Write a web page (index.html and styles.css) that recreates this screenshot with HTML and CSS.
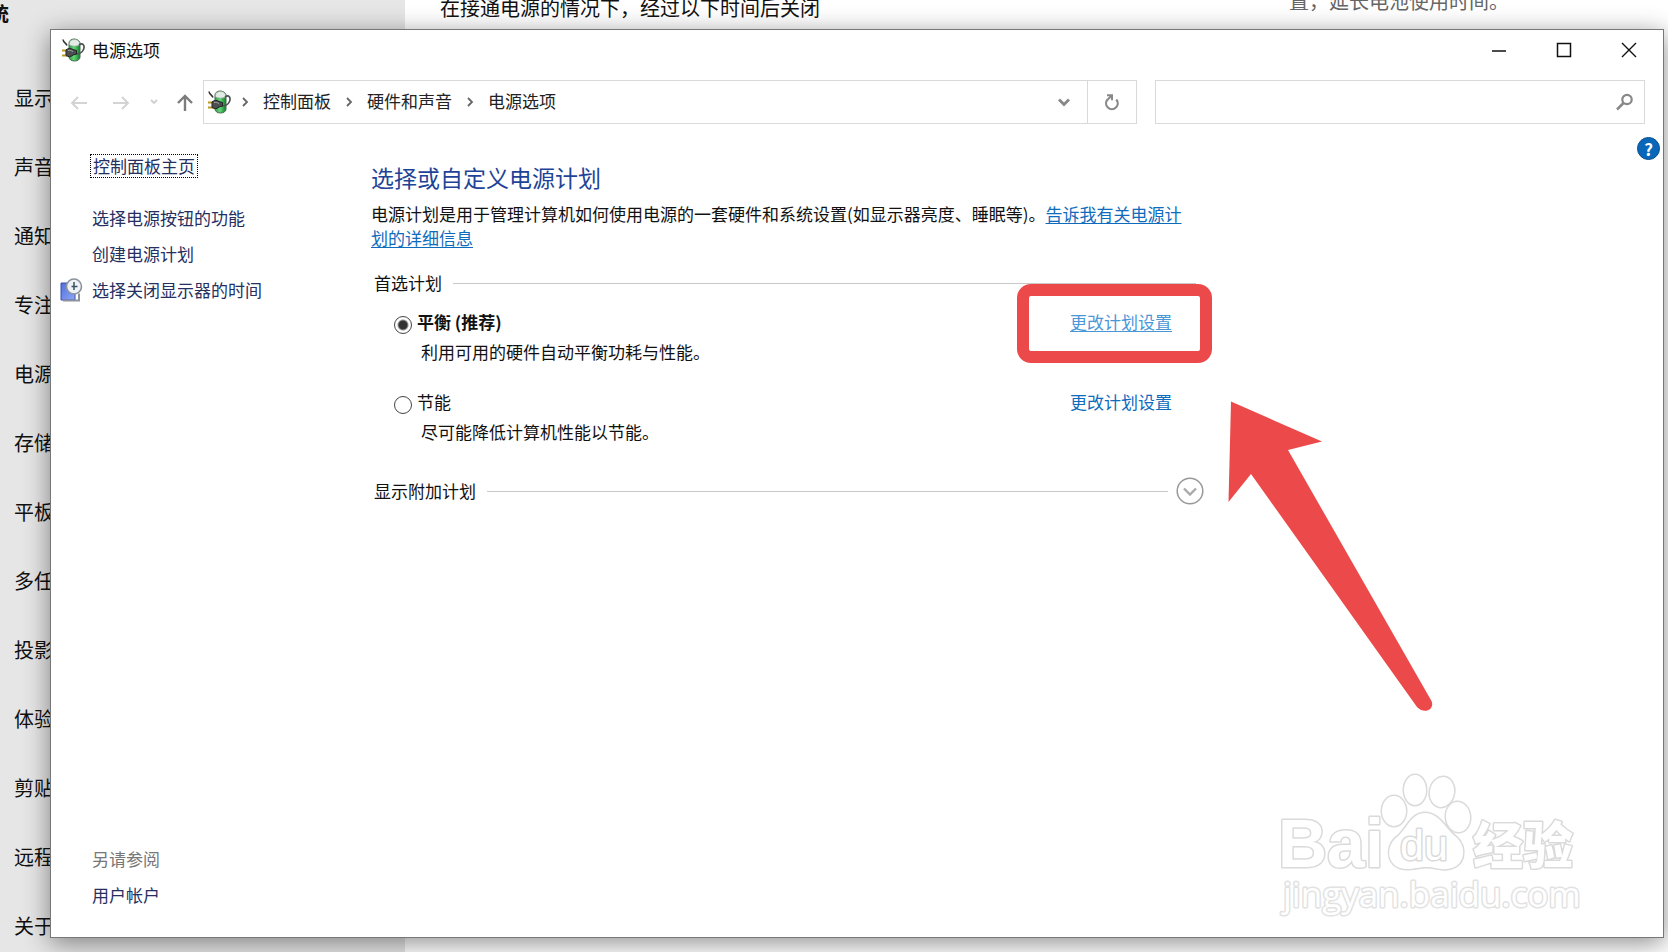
FILE: index.html
```html
<!DOCTYPE html>
<html lang="zh-CN">
<head>
    <meta charset="UTF-8">
    <meta name="viewport" content="width=device-width, initial-scale=1.0">
    <title>电源选项</title>
    <link rel="stylesheet" href="styles.css">
</head>
<body>
    <!-- settings page behind the window -->
    <div class="settings">
        <nav class="settings-nav">
            <h2>统</h2>
            <ul>
                <li>显示</li>
                <li>声音</li>
                <li>通知</li>
                <li>专注</li>
                <li>电源</li>
                <li>存储</li>
                <li>平板</li>
                <li>多任</li>
                <li>投影</li>
                <li>体验</li>
                <li>剪贴</li>
                <li>远程</li>
                <li>关于</li>
            </ul>
        </nav>
        <div class="settings-body">
            <p>在接通电源的情况下，经过以下时间后关闭</p>
            <p class="tip">置，延长电池使用时间。</p>
        </div>
    </div>

    <svg class="defs" width="0" height="0" aria-hidden="true">
        <defs>
            <linearGradient id="cell" x1="0" x2="1">
                <stop offset="0" stop-color="#2f9a45"/>
                <stop offset="0.45" stop-color="#62d777"/>
                <stop offset="1" stop-color="#157a2c"/>
            </linearGradient>
            <linearGradient id="screen" x1="0" x2="1" y2="1">
                <stop offset="0" stop-color="#4f6fe0"/>
                <stop offset="1" stop-color="#8fa8f4"/>
            </linearGradient>
            <symbol id="battery" viewBox="0 0 24 24">
                <path d="M8 5c0-2 2-4 5-4s6 2 6 4v14c0 2.500-2.500 4-5.500 4S8 21.500 8 19z" fill="url(#cell)" stroke="#49684d"/>
                <path d="M8.500 5c0-2 2-3.500 4.800-3.500S18.500 3 18.500 5v2c-3 1.500-7 1.500-10 0z" fill="#e3ebe6" stroke="#98a59b" stroke-width=".6"/>
                <path d="M2 1.500c.5 3.500 3 3 4 6" fill="none" stroke="#333" stroke-width="1.600"/>
                <path d="M18 7c4-3 6 1 4.500 4.500C21 15 19 16 14 16" fill="none" stroke="#4c5351" stroke-width="1.700"/>
                <path d="M1 12.500h5M1 17.500h5" stroke="#b79a22" stroke-width="2"/>
                <path d="M5 12c2-2 5-2 7-.5l3.500 1v3.500l-3.500 1c-2 2-5 2-7 .5z" fill="#4b4f50" stroke="#222"/>
                <path d="M7 12.500c2-.5 3 0 5 1" fill="none" stroke="#a5aaab"/>
            </symbol>
            <symbol id="crumb" viewBox="0 0 8 10">
                <path d="M2 1l4 4-4 4" fill="none" stroke="#666" stroke-width="1.800"/>
            </symbol>
        </defs>
    </svg>

    <div class="window">
        <header class="titlebar">
            <svg class="app-icon" width="24" height="24"><use href="#battery"/></svg>
            <h1>电源选项</h1>
            <button type="button" aria-label="最小化">
                <svg width="16" height="16"><path d="M1 9h14" stroke="#111" stroke-width="1.500"/></svg>
            </button>
            <button type="button" aria-label="最大化">
                <svg width="16" height="16"><rect x="1.500" y="1.500" width="13" height="13" fill="none" stroke="#111" stroke-width="1.500"/></svg>
            </button>
            <button type="button" aria-label="关闭">
                <svg width="16" height="16"><path d="M1 1l14 14M15 1L1 15" stroke="#111" stroke-width="1.400"/></svg>
            </button>
        </header>

        <div class="toolbar">
            <button type="button" class="nav-btn" aria-label="后退">
                <svg width="18" height="16"><path d="M17 9H2M8 3L2 9l6 6" fill="none" stroke="#d4d4d4" stroke-width="2"/></svg>
            </button>
            <button type="button" class="nav-btn" aria-label="前进">
                <svg width="18" height="16"><path d="M1 9h15M10 3l6 6-6 6" fill="none" stroke="#d4d4d4" stroke-width="2"/></svg>
            </button>
            <button type="button" class="nav-btn recent" aria-label="最近">
                <svg width="8" height="6"><path d="M1 1l3 3 3-3" fill="none" stroke="#cfcfcf" stroke-width="1.800"/></svg>
            </button>
            <button type="button" class="nav-btn up" aria-label="上移">
                <svg width="18" height="18"><path d="M9 18V3M2 10l7-7 7 7" fill="none" stroke="#7c7c7c" stroke-width="2.400"/></svg>
            </button>
            <div class="address">
                <svg class="app-icon" width="24" height="24"><use href="#battery"/></svg>
                <svg width="8" height="10"><use href="#crumb"/></svg>
                <a href="#">控制面板</a>
                <svg width="8" height="10"><use href="#crumb"/></svg>
                <a href="#">硬件和声音</a>
                <svg width="8" height="10"><use href="#crumb"/></svg>
                <a href="#">电源选项</a>
                <button type="button" class="drop" aria-label="历史记录">
                    <svg width="14" height="10"><path d="M2 2.500l5 5 5-5" fill="none" stroke="#888" stroke-width="2.800"/></svg>
                </button>
                <button type="button" class="refresh" aria-label="刷新">
                    <svg width="18" height="18"><path d="M13.300 6.500A5.800 5.800 0 1 1 4.500 6.500" fill="none" stroke="#888" stroke-width="2.200"/><path d="M4 2.200h5v5M9 2.200L4.500 6.800" fill="none" stroke="#888" stroke-width="2"/></svg>
                </button>
            </div>
            <div class="search">
                <input type="text" aria-label="搜索">
                <svg width="18" height="18"><circle cx="12" cy="6.500" r="4.700" fill="none" stroke="#888" stroke-width="2.200"/><path d="M8.500 10L2 16.500" stroke="#888" stroke-width="2.500"/></svg>
            </div>
        </div>

        <div class="content">
            <aside class="sidebar">
                <a href="#" class="home">控制面板主页</a>
                <ul>
                    <li><a href="#">选择电源按钮的功能</a></li>
                    <li><a href="#">创建电源计划</a></li>
                    <li>
                        <svg width="24" height="24">
                            <path d="M1 5h14v17H1z" fill="url(#screen)" stroke="#3d50a8"/>
                            <path d="M3 22.500h16v-7" fill="none" stroke="#8d929f" stroke-width="2"/>
                            <circle cx="14" cy="8.500" r="7.500" fill="#eef2f6" stroke="#8b949c" stroke-width="1.600"/>
                            <path d="M14 4v8M11.500 8.500h6" fill="none" stroke="#39505f" stroke-width="1.500"/>
                        </svg>
                        <a href="#">选择关闭显示器的时间</a>
                    </li>
                </ul>
                <div class="see-also">
                    <p>另请参阅</p>
                    <a href="#">用户帐户</a>
                </div>
            </aside>

            <main class="main">
                <h2>选择或自定义电源计划</h2>
                <p class="intro">电源计划是用于管理计算机如何使用电源的一套硬件和系统设置(如显示器亮度、睡眠等)。<a href="#">告诉我有关电源计划的详细信息</a></p>

                <div class="group preferred">首选计划</div>
                <div class="plan">
                    <div class="plan-row">
                        <input type="radio" name="plan" id="balanced" checked>
                        <label for="balanced" class="active">平衡 (推荐)</label>
                        <a href="#" class="hover">更改计划设置</a>
                    </div>
                    <p>利用可用的硬件自动平衡功耗与性能。</p>
                </div>
                <div class="plan">
                    <div class="plan-row">
                        <input type="radio" name="plan" id="saver">
                        <label for="saver">节能</label>
                        <a href="#">更改计划设置</a>
                    </div>
                    <p>尽可能降低计算机性能以节能。</p>
                </div>

                <div class="group extra">显示附加计划
                    <button type="button" aria-label="展开">
                        <svg width="28" height="28"><circle cx="14" cy="14" r="12.800" fill="#fff" stroke="#999" stroke-width="1.500"/><path d="M8 11.500l6 6 6-6" fill="none" stroke="#aaa" stroke-width="2.400"/></svg>
                    </button>
                </div>
            </main>

            <button type="button" class="help" aria-label="帮助">?</button>
        </div>
    </div>

    <!-- callout and arrow -->
    <div class="callout"></div>
    <svg class="arrow" width="206" height="314" viewBox="0 0 206 314">
        <path d="M4 1.500L95 41.500 61 50 204.500 301C208 309 198 315 190 307L24 74 1.500 102z" fill="#ec4a4a"/>
    </svg>

    <svg class="watermark" width="310" height="156" viewBox="0 0 310 156">
        <text class="bai" x="4" y="99">Bai</text>
        <ellipse cx="120" cy="43" rx="12" ry="15"/>
        <ellipse cx="141" cy="22" rx="11" ry="15"/>
        <ellipse cx="168" cy="24" rx="12" ry="15" transform="rotate(12 168 24)"/>
        <ellipse cx="184" cy="49" rx="12" ry="15" transform="rotate(-6 184 49)"/>
        <path d="M151 45c-14 0-18 16-28 24-13 10-10 32 10 32 8 0 12-2 20-2s12 3 20 2c18-1 21-22 9-32-11-9-17-24-31-24z"/>
        <text class="du" x="126" y="92">du</text>
        <text class="jy" x="199" y="96">经验</text>
        <text class="url" x="9" y="139">jingyan.baidu.com</text>
    </svg>
</body>
</html>
```
FILE: styles.css
```css
* { box-sizing: border-box; }
body { margin: 0; height: 100vh; position: relative; overflow: hidden; background: #fff; color: #111; font-family: "Noto Sans CJK SC", sans-serif; font-size: 17px; line-height: 24px; }
h1, h2, p, ul { margin: 0; padding: 0; font-weight: normal; }
ul { list-style: none; }
a { color: #0f6cbd; text-decoration: none; }
button { border: none; background: none; padding: 0; display: flex; align-items: center; justify-content: center; font: inherit; }
svg { display: block; flex-shrink: 0; }
.defs { position: absolute; }

/* settings page behind */
.settings { display: flex; height: 100%; font-size: 20px; }
.settings-nav { width: 405px; background: #e6e6e6; }
.settings-nav h2 { font-size: 20px; font-weight: bold; line-height: 28px; margin-left: -11px; }
.settings-nav ul { padding: 36px 0 0 14px; }
.settings-nav li { line-height: 24px; height: 69px; padding-top: 22px; }
.settings-body { flex: 1; display: flex; justify-content: space-between; padding: 0 159px 0 35px; line-height: 16px; }
.tip { color: #666; line-height: 2px; }

/* window */
.window { position: absolute; top: 29px; left: 50px; right: 4px; bottom: 14px; display: flex; flex-direction: column; background: #fff; border: 1px solid #777; box-shadow: 0 5px 24px rgba(0,0,0,0.45); }
.titlebar { display: flex; align-items: center; height: 42px; padding: 0 2px 2px 10px; }
.titlebar h1 { flex: 1; font-size: 17px; margin-left: 7px; }
.titlebar button { width: 65px; height: 40px; }

.toolbar { display: flex; padding: 8px 18px 8px 7px; }
.nav-btn { width: 42px; height: 44px; }
.recent { width: 24px; }
.up { width: 37px; }
.address { flex: 1; display: flex; align-items: center; height: 44px; padding-left: 3px; border: 1px solid #d9d9d9; }
.address > svg:not(.app-icon) { margin: 0 14px; }
.address > .app-icon + svg { margin-left: 10px; }
.address a { padding-bottom: 2px; color: #222; }
.drop { width: 46px; height: 42px; margin-left: auto; }
.refresh { width: 49px; height: 42px; border-left: 1px solid #d9d9d9; }
.search { display: flex; align-items: center; width: 490px; height: 44px; margin-left: 18px; padding-right: 11px; border: 1px solid #d9d9d9; }
.search input { flex: 1; height: 40px; padding: 0 8px; border: none; outline: none; font: inherit; }

.content { flex: 1; display: flex; padding-right: 3px; }
.sidebar { display: flex; flex-direction: column; width: 320px; padding: 22px 0 30px 9px; }
.sidebar a { color: #26305f; }
.sidebar .home { align-self: flex-start; margin-left: 30px; padding: 0 2px; line-height: 22px; border: 1px dotted #000; }
.sidebar ul { display: flex; flex-direction: column; gap: 12px; margin-top: 28px; }
.sidebar li { display: flex; gap: 8px; }
.sidebar li > a:first-child, .see-also { padding-left: 32px; }
.see-also { margin-top: auto; }
.see-also p { color: #777; margin-bottom: 12px; }
.see-also a { display: block; }

.main { width: 833px; padding-top: 30px; }
.main h2 { font-size: 23px; line-height: 30px; color: #1f4497; }
.intro { width: 825px; margin-top: 10px; }
.intro a, .hover { text-decoration: underline; text-underline-offset: 2px; }
.group { display: flex; align-items: center; padding-left: 3px; }
.group::after { content: ""; flex: 1; height: 1px; margin-left: 11px; background: #c8c8c8; }
.preferred { margin: 21px 8px 15px 0; }
.extra { height: 28px; margin-top: 33px; }
.extra::after { margin-right: 8px; }
.extra button { order: 1; }
.plan + .plan { margin-top: 26px; }
.plan-row { display: flex; align-items: flex-end; padding: 0 32px 0 23px; }
.plan-row input { appearance: none; width: 18px; height: 18px; margin: 0 5px 0 0; border: 1px solid #444; border-radius: 50%; background: #fff; }
.plan-row input:checked { background: radial-gradient(circle, #333 4px, #fff 6px); }
.plan-row a { margin-left: auto; }
.plan-row .hover { color: #4a97d8; }
.active { font-weight: bold; }
.plan p { margin: 6px 0 0 50px; }
.help { width: 23px; height: 23px; margin: 5px 0 0 auto; border-radius: 50%; background: #0867b8; border: 1px solid #084f8f; color: #fff; font-weight: bold; }

/* overlays */
.callout { position: absolute; top: 284px; left: 1017px; width: 195px; height: 79px; border: 12px solid #ec4a4a; border-radius: 14px; }
.arrow { position: absolute; top: 400px; left: 1227px; }
.watermark { position: absolute; top: 768px; left: 1274px; fill: #fff; stroke: #dadada; stroke-width: 3px; paint-order: stroke; stroke-linejoin: round; }
.bai { font: bold 68px "Liberation Sans", sans-serif; }
.du { font: 43px "Liberation Sans", sans-serif; }
.jy { font: 900 50px "Noto Sans CJK SC", sans-serif; }
.url { font: 35px "Open Sans", sans-serif; stroke: #e2e2e2; }
```
